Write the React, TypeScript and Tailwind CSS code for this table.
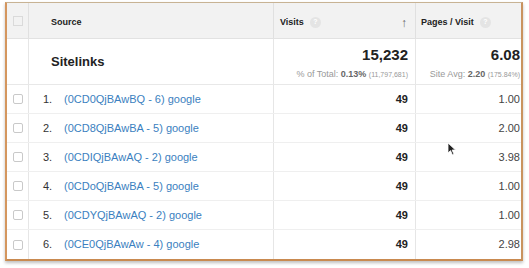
import React from 'react';

const rows = [
  { n: '1.', src: '(0CD0QjBAwBQ - 6) google', visits: '49', ppv: '1.00' },
  { n: '2.', src: '(0CD8QjBAwBA - 5) google', visits: '49', ppv: '2.00' },
  { n: '3.', src: '(0CDIQjBAwAQ - 2) google', visits: '49', ppv: '3.98' },
  { n: '4.', src: '(0CDoQjBAwBA - 5) google', visits: '49', ppv: '1.00' },
  { n: '5.', src: '(0CDYQjBAwAQ - 2) google', visits: '49', ppv: '1.00' },
  { n: '6.', src: '(0CE0QjBAwAw - 4) google', visits: '49', ppv: '2.98' },
];

const Help = () => (
  <span className="ml-[6px] inline-flex h-[11px] w-[11px] items-center justify-center rounded-full bg-[#e4e4e4] text-[7px] font-bold text-white">
    ?
  </span>
);

const Check = () => (
  <div className="h-[10px] w-[10px] rounded-[2px] border border-[#c9c9c9] bg-white" />
);

const cols = 'grid grid-cols-[22px_244px_142px_106px]';

export default function App() {
  return (
    <div className="relative h-[268px] w-[529px] bg-white font-['Liberation_Sans',Arial,sans-serif] text-[#333]">
      <div className="ml-[5px] pt-[2px]">
        <div className="w-[518px] overflow-hidden border-t border-t-[#c8b394] border-l-2 border-l-[#d4965e] border-r-2 border-r-[#c9935f] border-b-2 border-b-[#c98a50] shadow-[0_2px_3px_rgba(0,0,0,0.25)]">
          {/* header */}
          <div className={`${cols} h-[36px] border-b border-[#e2e2e2] bg-[#f2f2f2]`}>
            <div className="flex items-center justify-center border-r border-[#e0e0e0]">
              <div className="h-[10px] w-[10px] border border-[#dadada]" />
            </div>
            <div className="flex items-center pl-[22px] pt-[4px] text-[9px] font-bold text-[#222]">Source</div>
            <div className="flex items-center border-l border-[#e0e0e0] pl-[6px] pr-[8px] pt-[4px] text-[9px] font-bold text-[#222]">
              Visits
              <Help />
              <span className="ml-auto text-[12px] text-[#666]">↑</span>
            </div>
            <div className="flex items-center border-l border-[#e0e0e0] pl-[5px] pt-[4px] text-[9px] font-bold text-[#222]">
              Pages / Visit
              <Help />
            </div>
          </div>

          {/* totals */}
          <div className={`${cols} h-[46px] border-b border-[#e8e8e8]`}>
            <div className="border-r border-[#e6e6e6]" />
            <div className="flex items-center pl-[22px] pt-[1px] text-[13px] font-bold text-[#222]">Sitelinks</div>
            <div className="flex flex-col items-end border-l border-[#e6e6e6] pr-[7px] pt-[7px]">
              <span className="text-[15px] font-bold leading-[18px] text-[#222]">15,232</span>
              <span className="mt-[4px] whitespace-nowrap text-[9px] text-[#999]">
                % of Total: <b className="text-[#666]">0.13%</b> <span className="text-[7px]">(11,797,681)</span>
              </span>
            </div>
            <div className="flex flex-col items-end border-l border-[#e6e6e6] pr-[1px] pt-[7px]">
              <span className="text-[15px] font-bold leading-[18px] text-[#222]">6.08</span>
              <span className="mt-[4px] whitespace-nowrap text-[9px] text-[#999]">
                Site Avg: <b className="text-[#666]">2.20</b> <span className="text-[7px]">(175.84%)</span>
              </span>
            </div>
          </div>

          {rows.map((r, i) => (
            <div key={r.n} className={`${cols} h-[29px] ${i < rows.length - 1 ? 'border-b border-[#efefef]' : ''}`}>
              <div className="flex items-center justify-center border-r border-[#e6e6e6]">
                <Check />
              </div>
              <div className="flex items-center text-[11px]">
                <span className="w-[35px] pl-[14px] text-[#333]">{r.n}</span>
                <span className="text-[#3b7fc0]">{r.src}</span>
              </div>
              <div className="flex items-center justify-end border-l border-[#e6e6e6] pr-[7px] text-[11px] font-bold text-[#222]">
                {r.visits}
              </div>
              <div className="flex items-center justify-end border-l border-[#e6e6e6] pr-[1px] text-[11px] text-[#444]">
                {r.ppv}
              </div>
            </div>
          ))}
        </div>
      </div>

      {/* mouse cursor */}
      <svg className="absolute left-[447px] top-[142px]" width="10" height="14" viewBox="0 0 10 14">
        <path d="M1 1 L1 11 L3.5 8.6 L5.5 13 L7 12.3 L5.1 8 L8.5 8 Z" fill="#222" stroke="#fff" strokeWidth="0.8" />
      </svg>
    </div>
  );
}
